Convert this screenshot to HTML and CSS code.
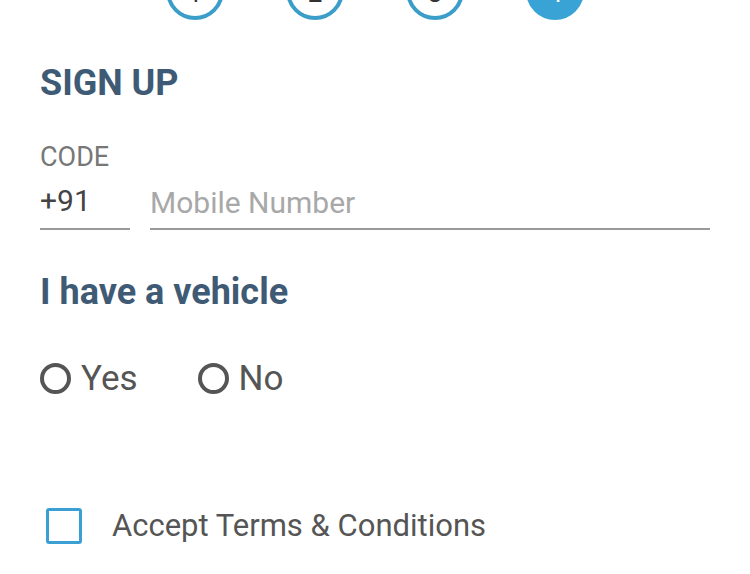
FILE: index.html
```html
<!DOCTYPE html>
<html>
<head>
<meta charset="utf-8">
<link rel="stylesheet" href="styles.css">
</head>
<body>
<div class="page">
  <div class="steps">
    <div class="step">1</div>
    <div class="step">2</div>
    <div class="step">3</div>
    <div class="step active">4</div>
  </div>
  <h1 class="title">SIGN UP</h1>
  <div class="phone">
    <div class="code">
      <div class="code-label">CODE</div>
      <div class="code-value">+91</div>
    </div>
    <div class="mobile">
      <span class="placeholder">Mobile Number</span>
    </div>
  </div>
  <h2 class="subtitle">I have a vehicle</h2>
  <div class="radios">
    <label class="radio"><span class="dot"></span><span>Yes</span></label>
    <label class="radio"><span class="dot"></span><span>No</span></label>
  </div>
  <div class="terms">
    <span class="box"></span>
    <span class="terms-text">Accept Terms &amp; Conditions</span>
  </div>
</div>
</body>
</html>
```
FILE: styles.css
```css
html, body {
  margin: 0;
  padding: 0;
  background: #ffffff;
  font-family: Roboto, "Liberation Sans", sans-serif;
}
.page {
  width: 750px;
  padding: 0 40px 20px;
  box-sizing: border-box;
}
.steps {
  display: flex;
  gap: 62px;
  margin-left: 126px;
  margin-top: -38px;
  height: 58px;
}
.step {
  width: 58px;
  height: 58px;
  flex: none;
  box-sizing: border-box;
  border: 4px solid #3a9ec9;
  border-radius: 50%;
  display: flex;
  align-items: flex-end;
  justify-content: center;
  padding-bottom: 10px;
  font-size: 26px;
  color: #333;
  line-height: 1;
}
.step.active {
  background: #3aa3d6;
  border-color: #3aa3d6;
  color: #fff;
}
.title {
  margin: 41px 0 0;
  font-size: 36px;
  font-weight: 700;
  color: #3e5a74;
  line-height: 44px;
}
.phone {
  display: flex;
  gap: 20px;
  margin-top: 37px;
  align-items: flex-end;
}
.code {
  width: 90px;
  flex: none;
  border-bottom: 2px solid #999;
}
.code-label {
  font-size: 27px;
  color: #777;
  line-height: 31px;
}
.code-value {
  font-size: 30px;
  color: #444;
  line-height: 36px;
  padding-top: 10px;
  padding-bottom: 9px;
}
.mobile {
  flex: 1;
  border-bottom: 2px solid #999;
  padding-bottom: 7px;
}
.placeholder {
  font-size: 30px;
  color: #a8a8a8;
  line-height: 36px;
}
.subtitle {
  margin: 40px 0 0;
  font-size: 36px;
  font-weight: 700;
  color: #3e5a74;
  line-height: 44px;
}
.radios {
  display: flex;
  gap: 60px;
  margin-top: 45px;
}
.radio {
  display: flex;
  align-items: center;
  gap: 10px;
  font-size: 35px;
  color: #555;
  line-height: 40px;
}
.dot {
  width: 31px;
  height: 31px;
  box-sizing: border-box;
  border: 4px solid #555;
  border-radius: 50%;
  margin-top: -2px;
}
.terms {
  display: flex;
  align-items: center;
  gap: 30px;
  margin-top: 109px;
  padding-left: 6px;
}
.box {
  width: 36px;
  height: 36px;
  box-sizing: border-box;
  border: 3.5px solid #3aa0d4;
  border-radius: 3px;
}
.terms-text {
  font-size: 31px;
  color: #555;
  line-height: 36px;
}
```
